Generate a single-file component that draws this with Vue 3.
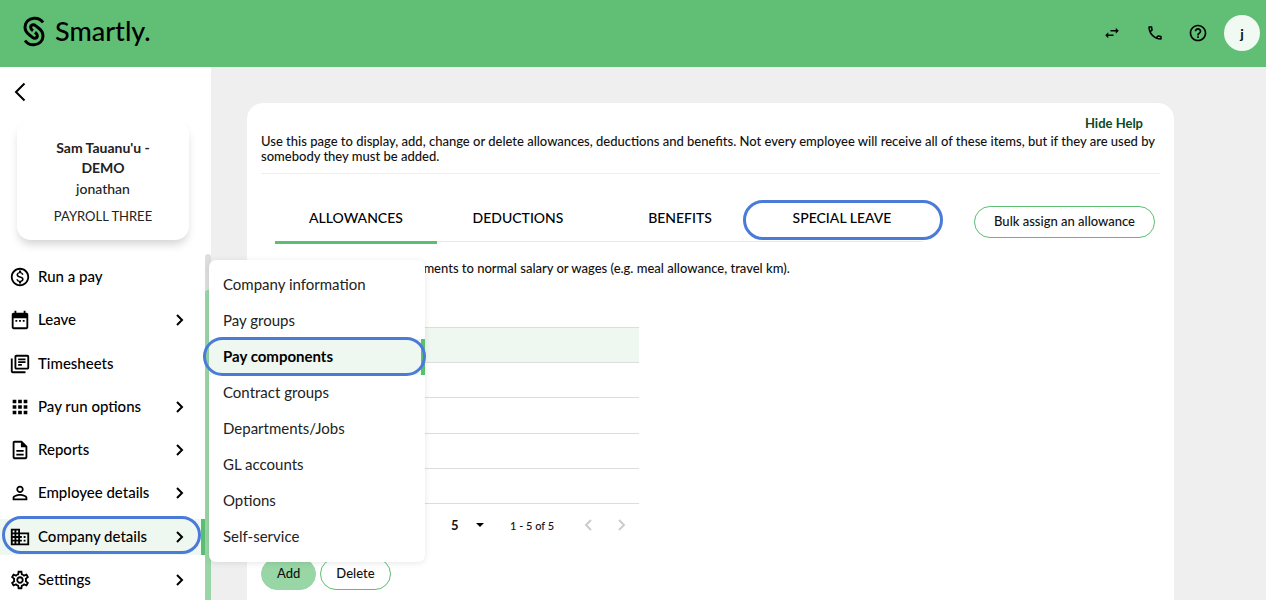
<script setup>
import { ref } from 'vue'

const navItems = [
  { label: 'Run a pay', icon: 'pay', children: false },
  { label: 'Leave', icon: 'calendar', children: true },
  { label: 'Timesheets', icon: 'sheets', children: false },
  { label: 'Pay run options', icon: 'grid', children: true },
  { label: 'Reports', icon: 'report', children: true },
  { label: 'Employee details', icon: 'person', children: true },
  { label: 'Company details', icon: 'building', children: true },
  { label: 'Settings', icon: 'gear', children: true }
]

const icons = {
  pay: 'M12 2C6.48 2 2 6.48 2 12s4.48 10 10 10 10-4.48 10-10S17.52 2 12 2zm0 18c-4.41 0-8-3.59-8-8s3.59-8 8-8 8 3.59 8 8-3.59 8-8 8zm.31-8.86c-1.77-.45-2.34-.94-2.34-1.67 0-.84.79-1.43 2.1-1.43 1.38 0 1.9.66 1.94 1.64h1.71c-.05-1.34-.87-2.57-2.49-2.97V5H10.9v1.69c-1.51.32-2.72 1.3-2.72 2.81 0 1.79 1.49 2.69 3.66 3.21 1.95.46 2.34 1.15 2.34 1.87 0 .53-.39 1.39-2.1 1.39-1.6 0-2.23-.72-2.32-1.64H8.04c.1 1.7 1.36 2.66 2.86 2.97V19h2.34v-1.67c1.52-.29 2.72-1.16 2.73-2.77-.01-2.2-1.9-2.96-3.66-3.42z',
  calendar: 'M19 4h-1V2h-2v2H8V2H6v2H5c-1.11 0-2 .9-2 2v14c0 1.1.89 2 2 2h14c1.1 0 2-.9 2-2V6c0-1.1-.9-2-2-2zm0 16H5V10h14v10zM7 12h2v2H7zm4 0h2v2h-2zm4 0h2v2h-2z',
  sheets: 'M20 2H8c-1.1 0-2 .9-2 2v12c0 1.1.9 2 2 2h12c1.1 0 2-.9 2-2V4c0-1.1-.9-2-2-2zm0 14H8V4h12v12zM10 9h8v2h-8zm0 3h4v2h-4zm0-6h8v2h-8zM4 6H2v14c0 1.1.9 2 2 2h14v-2H4V6z',
  grid: 'M4 8h4V4H4v4zm6 12h4v-4h-4v4zm-6 0h4v-4H4v4zm0-6h4v-4H4v4zm6 0h4v-4h-4v4zm6-10v4h4V4h-4zm-6 4h4V4h-4v4zm6 6h4v-4h-4v4zm0 6h4v-4h-4v4z',
  report: 'M8 16h8v2H8zm0-4h8v2H8zm6-10H6c-1.1 0-2 .9-2 2v16c0 1.1.89 2 1.99 2H18c1.1 0 2-.9 2-2V8l-6-6zm4 18H6V4h7v5h5v11z',
  person: 'M12 5.9a2.1 2.1 0 110 4.2 2.1 2.1 0 010-4.2m0 9c2.97 0 6.1 1.46 6.1 2.1v1.1H5.9V17c0-.64 3.13-2.1 6.1-2.1M12 4C9.79 4 8 5.79 8 8s1.79 4 4 4 4-1.79 4-4-1.79-4-4-4zm0 9c-2.67 0-8 1.34-8 4v3h16v-3c0-2.66-5.33-4-8-4z',
  building: 'M12 7V3H2v18h20V7H12zM6 19H4v-2h2v2zm0-4H4v-2h2v2zm0-4H4V9h2v2zm0-4H4V5h2v2zm4 12H8v-2h2v2zm0-4H8v-2h2v2zm0-4H8V9h2v2zm0-4H8V5h2v2zm10 12h-8v-2h2v-2h-2v-2h2v-2h-2V9h8v10zm-2-8h-2v2h2v-2zm0 4h-2v2h2v-2z',
  gear: 'M19.43 12.98c.04-.32.07-.64.07-.98 0-.34-.03-.66-.07-.98l2.11-1.65c.19-.15.24-.42.12-.64l-2-3.46c-.09-.16-.26-.25-.44-.25-.06 0-.12.01-.17.03l-2.49 1c-.52-.4-1.08-.73-1.69-.98l-.38-2.65C14.46 2.18 14.25 2 14 2h-4c-.25 0-.46.18-.49.42l-.38 2.65c-.61.25-1.17.59-1.69.98l-2.49-1c-.06-.02-.12-.03-.18-.03-.17 0-.34.09-.43.25l-2 3.46c-.13.22-.07.49.12.64l2.11 1.65c-.04.32-.07.65-.07.98 0 .33.03.66.07.98l-2.11 1.65c-.19.15-.24.42-.12.64l2 3.46c.09.16.26.25.44.25.06 0 .12-.01.17-.03l2.49-1c.52.4 1.08.73 1.69.98l.38 2.65c.03.24.24.42.49.42h4c.25 0 .46-.18.49-.42l.38-2.65c.61-.25 1.17-.59 1.69-.98l2.49 1c.06.02.12.03.18.03.17 0 .34-.09.43-.25l2-3.46c.12-.22.07-.49-.12-.64l-2.11-1.65zm-1.98-1.71c.04.31.05.52.05.73 0 .21-.02.43-.05.73l-.14 1.13.89.7 1.08.84-.7 1.21-1.27-.51-1.04-.42-.9.68c-.43.32-.84.56-1.25.73l-1.06.43-.16 1.13-.2 1.35h-1.4l-.19-1.35-.16-1.13-1.06-.43c-.43-.18-.83-.41-1.23-.71l-.91-.7-1.06.43-1.27.51-.7-1.21 1.08-.84.89-.7-.14-1.13c-.03-.31-.05-.54-.05-.74s.02-.43.05-.73l.14-1.13-.89-.7-1.08-.84.7-1.21 1.27.51 1.04.42.9-.68c.43-.32.84-.56 1.25-.73l1.06-.43.16-1.13.2-1.35h1.39l.19 1.35.16 1.13 1.06.43c.43.18.83.41 1.23.71l.91.7 1.06-.43 1.27-.51.7 1.21-1.07.85-.89.7.14 1.13zM12 8c-2.21 0-4 1.79-4 4s1.79 4 4 4 4-1.79 4-4-1.79-4-4-4zm0 6c-1.1 0-2-.9-2-2s.9-2 2-2 2 .9 2 2-.9 2-2 2z'
}

const activeNav = 'Company details'

const submenu = [
  'Company information',
  'Pay groups',
  'Pay components',
  'Contract groups',
  'Departments/Jobs',
  'GL accounts',
  'Options',
  'Self-service'
]
const activeSub = 'Pay components'

const tabs = ['ALLOWANCES', 'DEDUCTIONS', 'BENEFITS', 'SPECIAL LEAVE']
const activeTab = ref('ALLOWANCES')
const pageSize = ref('5')
</script>

<template>
  <div class="app">
    <header class="topbar">
      <a href="#" class="brand" aria-label="Smartly home">
        <svg class="logo" viewBox="23 15 22 31" aria-hidden="true">
          <path d="M43 21.5C41 18.5 37.5 17 34 17.2C28.5 17.5 25 21.5 25 26C25 29.5 26.5 31.8 29.5 34L32.5 36.3C34.5 38 37.5 37 37.3 34.5C37.2 33 36.5 32.3 35 31.2" />
          <path d="M25 39.5C27 42.5 30.5 44 34 43.8C39.5 43.5 43 39.5 43 35C43 31.5 41.5 29.2 38.5 27L35.5 24.7C33.5 23 30.5 24 30.7 26.5C30.8 28 31.5 28.7 33 29.8" />
        </svg>
        <span class="wordmark">Smartly.</span>
      </a>
      <div class="actions">
        <button type="button" class="icon-btn" aria-label="Switch">
          <svg viewBox="0 0 24 24" width="18" height="18"><path d="M6.99 11L3 15l3.99 4v-3H14v-2H6.99v-3zM21 9l-3.99-4v3H10v2h7.01v3L21 9z" /></svg>
        </button>
        <button type="button" class="icon-btn" aria-label="Call">
          <svg viewBox="0 0 24 24" width="18" height="18"><path d="M6.54 5c.06.89.21 1.76.45 2.59l-1.2 1.2c-.41-1.2-.67-2.47-.76-3.79h1.51m9.86 12.02c.85.24 1.72.39 2.6.45v1.49c-1.32-.09-2.59-.35-3.8-.75l1.2-1.19M7.5 3H4c-.55 0-1 .45-1 1 0 9.39 7.61 17 17 17 .55 0 1-.45 1-1v-3.49c0-.55-.45-1-1-1-1.24 0-2.45-.2-3.57-.57-.1-.04-.21-.05-.31-.05-.26 0-.51.1-.71.29l-2.2 2.2c-2.83-1.45-5.15-3.76-6.59-6.59l2.2-2.2c.28-.28.36-.67.25-1.02C8.7 6.45 8.5 5.25 8.5 4c0-.55-.45-1-1-1z" /></svg>
        </button>
        <button type="button" class="icon-btn" aria-label="Help">
          <svg viewBox="0 0 24 24" width="20" height="20"><path d="M11 18h2v-2h-2v2zm1-16C6.48 2 2 6.48 2 12s4.48 10 10 10 10-4.48 10-10S17.52 2 12 2zm0 18c-4.41 0-8-3.59-8-8s3.59-8 8-8 8 3.59 8 8-3.59 8-8 8zm0-14c-2.21 0-4 1.79-4 4h2c0-1.1.9-2 2-2s2 .9 2 2c0 2-3 1.75-3 5h2c0-2.25 3-2.5 3-5 0-2.21-1.79-4-4-4z" /></svg>
        </button>
        <button type="button" class="avatar" aria-label="Account j">j</button>
      </div>
    </header>

    <div class="body">
      <aside class="sidebar">
        <button type="button" class="back" aria-label="Back">
          <svg viewBox="0 0 12 20" width="12" height="20"><path d="M10.5 1.5L2 10l8.5 8.5" /></svg>
        </button>
        <section class="profile">
          <h2>Sam Tauanu'u - DEMO</h2>
          <p class="user">jonathan</p>
          <p class="payroll">PAYROLL THREE</p>
        </section>
        <div class="nav-wrap">
          <nav class="nav" aria-label="Main">
            <a
              v-for="item in navItems"
              :key="item.label"
              href="#"
              class="nav-item"
              :class="{ active: item.label === activeNav }"
            >
              <svg class="nav-icon" viewBox="0 0 24 24" aria-hidden="true"><path :d="icons[item.icon]" /></svg>
              <span class="nav-label">{{ item.label }}</span>
              <svg v-if="item.children" class="chevron" viewBox="0 0 8 12" aria-hidden="true"><path d="M1 1l5 5-5 5" /></svg>
            </a>
          </nav>
          <div class="scroll-track"><div class="scroll-thumb"></div></div>
        </div>
        <nav class="submenu" aria-label="Company details">
          <a
            v-for="label in submenu"
            :key="label"
            href="#"
            class="sub-item"
            :class="{ active: label === activeSub }"
          >{{ label }}</a>
        </nav>
      </aside>

      <main class="main">
        <section class="card">
          <div class="help">
            <a href="#" class="hide-help">Hide Help</a>
            <p>Use this page to display, add, change or delete allowances, deductions and benefits. Not every employee will receive all of these items, but if they are used by somebody they must be added.</p>
          </div>

          <div class="toolbar">
            <div class="tabs" role="tablist">
              <button
                v-for="tab in tabs"
                :key="tab"
                type="button"
                role="tab"
                class="tab"
                :class="{ selected: tab === activeTab, ringed: tab === 'SPECIAL LEAVE' }"
                :aria-selected="tab === activeTab"
                @click="activeTab = tab"
              >{{ tab }}</button>
            </div>
            <button type="button" class="pill">Bulk assign an allowance</button>
          </div>

          <p class="note">payments to normal salary or wages (e.g. meal allowance, travel km).</p>

          <table class="grid">
            <tbody>
              <tr v-for="n in 5" :key="n" :class="{ current: n === 1 }"><td></td></tr>
            </tbody>
          </table>

          <div class="pager">
            <span class="size">
              <select v-model="pageSize" aria-label="Rows per page">
                <option>5</option>
                <option>10</option>
              </select>
              <svg viewBox="0 0 8 4" width="8" height="4" aria-hidden="true"><path d="M0 0h8L4 4z" /></svg>
            </span>
            <span class="range">1 - 5 of 5</span>
            <button type="button" class="page-btn" aria-label="Previous page" disabled>
              <svg viewBox="0 0 8 12" width="8" height="12"><path d="M7 1L2 6l5 5" /></svg>
            </button>
            <button type="button" class="page-btn" aria-label="Next page" disabled>
              <svg viewBox="0 0 8 12" width="8" height="12"><path d="M1 1l5 5-5 5" /></svg>
            </button>
          </div>

          <div class="buttons">
            <button type="button" class="pill filled">Add</button>
            <button type="button" class="pill">Delete</button>
          </div>
        </section>
      </main>
    </div>
  </div>
</template>

<style>
body {
  margin: 0;
  overflow: hidden;
}
</style>

<style scoped>
.app {
  display: flex;
  flex-direction: column;
  height: 100vh;
  background: #efefef;
  color: #111;
  font-family: Lato, "Open Sans", sans-serif;
  font-size: 13px;
  font-weight: 500;
}
.app *,
.app *::after {
  box-sizing: border-box;
}
button,
select {
  font: inherit;
  color: inherit;
  background: none;
  border: 0;
  padding: 0;
  cursor: pointer;
}
a {
  color: inherit;
  text-decoration: none;
}
p,
h2 {
  margin: 0;
}

.topbar {
  display: flex;
  flex: none;
  justify-content: space-between;
  align-items: center;
  height: 67px;
  padding: 0 6px 1px 23px;
  background: #60bf75;
}
.brand {
  display: flex;
  align-items: center;
  gap: 10px;
  padding-bottom: 4px;
}
.logo {
  width: 22px;
  height: 31px;
  fill: none;
  stroke: #000;
  stroke-width: 3;
}
.wordmark {
  font-size: 27px;
  line-height: 32px;
  color: #000;
}
.actions {
  display: flex;
  align-items: center;
}
.icon-btn {
  display: grid;
  place-items: center;
  width: 43px;
  height: 36px;
}
.avatar {
  width: 36px;
  height: 36px;
  margin-left: 5px;
  border-radius: 50%;
  background: #f0f9f2;
  font-size: 14px;
  font-weight: 700;
}

.body {
  display: flex;
  flex: 1;
  min-height: 0;
}
.sidebar {
  position: relative;
  z-index: 1;
  display: flex;
  flex: none;
  flex-direction: column;
  width: 211px;
  background: #fff;
}
.back {
  width: 40px;
  height: 50px;
  display: grid;
  place-items: center;
}
.back svg,
.chevron,
.page-btn svg {
  fill: none;
  stroke: #000;
  stroke-width: 2;
}
.profile {
  margin: 3px 22px 0 17px;
  height: 120px;
  padding: 18px 24px 0;
  border-radius: 14px;
  text-align: center;
  color: #222;
  box-shadow: 0 6px 10px -2px rgba(0, 0, 0, 0.18);
}
.profile h2 {
  font-size: 14px;
  font-weight: 700;
  line-height: 20px;
}
.profile .user {
  font-size: 14px;
  line-height: 22px;
}
.profile .payroll {
  margin-top: 6px;
  font-size: 13px;
  font-weight: 400;
  line-height: 20px;
  white-space: nowrap;
}
.nav-wrap {
  display: flex;
  flex: 1;
  margin-top: 14px;
}
.nav {
  display: flex;
  flex: 1;
  flex-direction: column;
  justify-content: space-between;
  padding: 5px 0 2px;
}
.nav-item {
  position: relative;
  display: flex;
  align-items: center;
  height: 36px;
  padding: 0 17px 0 9px;
  border-right: 4px solid transparent;
  font-size: 15px;
  color: #000;
}
.nav-item.active {
  background: #eef7f0;
  border-right-color: #5bbf72;
}
.nav-item.active::after,
.sub-item.active::after,
.tab.ringed::after {
  content: "";
  position: absolute;
  border: 3px solid #4a7bd8;
  border-radius: 20px;
}
.nav-item.active::after {
  inset: -3px 0 1px 2px;
}
.nav-icon {
  width: 22px;
  height: 22px;
  margin-right: 7px;
}
.nav-label {
  flex: 1;
  padding-bottom: 2px;
}
.chevron {
  width: 8px;
  height: 12px;
}
.scroll-track {
  width: 6px;
  padding-top: 36px;
  border-radius: 3px 3px 0 0;
  background: #dedede;
}
.scroll-thumb {
  height: 100%;
  border-radius: 3px 3px 0 0;
  background: #98d6a6;
}

.submenu {
  position: absolute;
  top: 193px;
  left: 209px;
  width: 216px;
  padding: 7px 0;
  border-radius: 7px;
  background: #fff;
  box-shadow: 0 1px 6px rgba(0, 0, 0, 0.1);
}
.sub-item {
  position: relative;
  display: flex;
  align-items: center;
  height: 36px;
  padding: 0 0 2px 14px;
  font-size: 15px;
  font-weight: 400;
  color: #222;
}
.sub-item.active {
  border-right: 4px solid #5bbf72;
  background: #eef7f0;
  font-weight: 700;
  color: #000;
}
.sub-item.active::after {
  inset: -2px -5px -1px -6px;
}

.main {
  flex: 1;
  min-width: 0;
  padding: 36px 92px 0 36px;
}
.card {
  height: 100%;
  padding: 13px 14px 0;
  border-radius: 16px 16px 0 0;
  background: #fff;
}
.help {
  display: flex;
  flex-direction: column;
  padding-bottom: 9px;
  border-bottom: 1px solid #eee;
  line-height: 15px;
}
.hide-help {
  align-self: flex-end;
  margin-right: 17px;
  margin-bottom: 3px;
  color: #0c4a24;
  font-weight: 700;
}
.toolbar {
  display: flex;
  align-items: flex-start;
  justify-content: space-between;
  padding: 22px 5px 0 14px;
}
.tabs {
  display: grid;
  flex: 0 1 648px;
  grid-template-columns: repeat(4, 1fr);
  border-bottom: 1px solid #eaeaea;
}
.tab {
  position: relative;
  height: 48px;
  margin-bottom: -3px;
  padding-bottom: 2px;
  border-bottom: 3px solid transparent;
  font-size: 14px;
  color: #000;
}
.tab.selected {
  border-bottom-color: #5bbf72;
}
.tab.ringed::after {
  inset: 4px -20px 1px -18px;
}
.pill {
  height: 32px;
  margin-top: 10px;
  padding: 0 19px 2px;
  border: 1px solid #5bbf72;
  border-radius: 16px;
  background: #fff;
}
.note {
  margin-top: 17px;
  padding-left: 142px;
  line-height: 18px;
}
.grid {
  width: 378px;
  height: 177px;
  margin-top: 50px;
  border-collapse: collapse;
}
.grid td {
  padding: 0;
  border-top: 1px solid #ddd;
  border-bottom: 1px solid #ddd;
}
.grid .current {
  background: #eef7f0;
}
.pager {
  display: flex;
  align-items: center;
  width: 378px;
  height: 42px;
  padding-left: 190px;
}
.size {
  display: flex;
  align-items: center;
  flex: none;
  width: 59px;
}
.size select {
  width: 25px;
  appearance: none;
  font-weight: 700;
}
.range {
  flex: none;
  width: 68px;
  font-size: 11px;
}
.page-btn {
  display: grid;
  flex: none;
  place-items: center;
  width: 20px;
  height: 24px;
  margin-right: 14px;
}
.page-btn svg {
  stroke: #ccc;
}
.buttons {
  display: flex;
  gap: 4px;
  margin-top: 2px;
}
.buttons .pill {
  padding: 0 15px 2px;
}
.pill.filled {
  border-color: #98d6a6;
  background: #98d6a6;
}
</style>
